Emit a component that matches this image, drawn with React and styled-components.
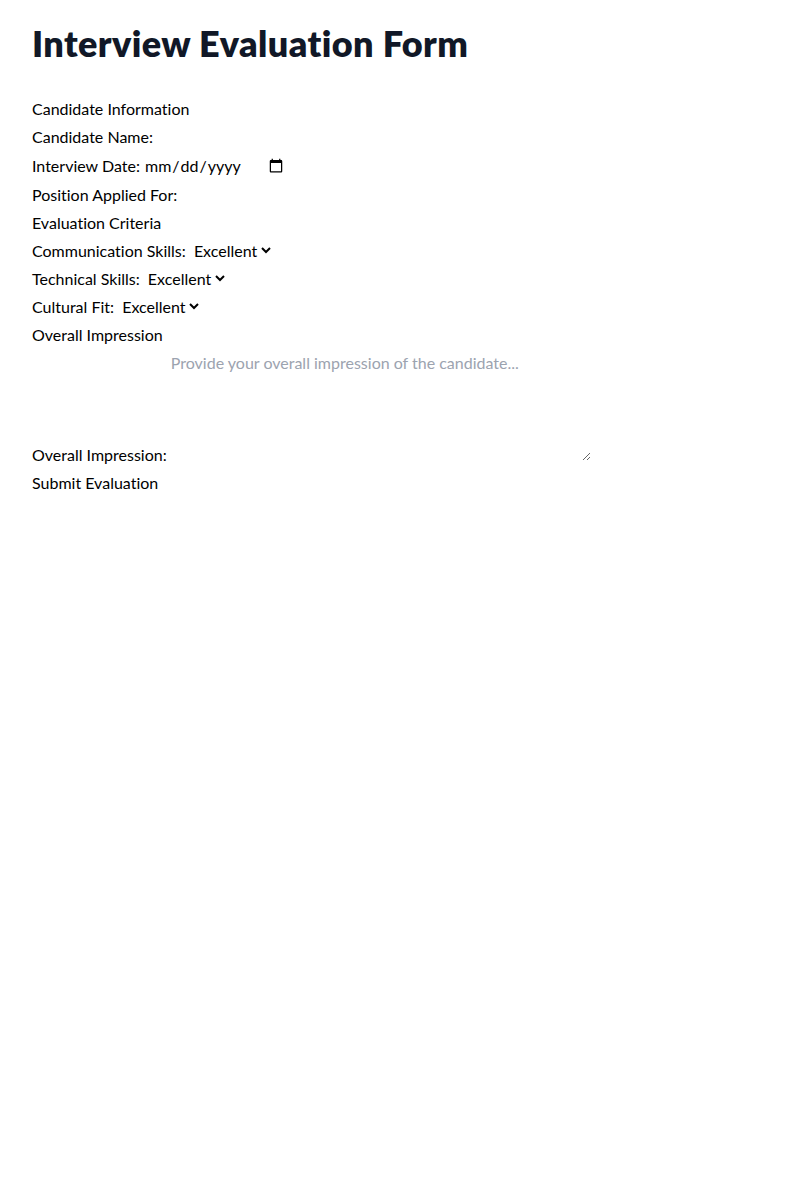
import styled, { createGlobalStyle } from "styled-components";

const GlobalStyle = createGlobalStyle`
  *, *::before, *::after {
    box-sizing: border-box;
    border-width: 0;
    border-style: solid;
  }
  html {
    line-height: 1.5;
  }
  body {
    margin: 0;
    font-family: Lato, "Noto Sans", sans-serif;
    font-variant-ligatures: none;
    background: #ffffff;
  }
  input, select, textarea, button {
    font-family: inherit;
    font-size: 100%;
    font-variant-ligatures: none;
    line-height: inherit;
    color: inherit;
    margin: 0;
    padding: 0;
    background-color: transparent;
  }
`;

const Page = styled.div`
  padding: 23px 32px;
`;

const Title = styled.h1`
  margin: 0 0 34px;
  font-size: 36px;
  line-height: 40px;
  font-weight: 800;
  letter-spacing: 0.4px;
  color: #111827;
`;

const Form = styled.form`
  display: flex;
  flex-direction: column;
  align-items: flex-start;
  gap: 4px;
  font-size: 16px;
`;

const Heading = styled.h2`
  margin: 0;
  font-size: 16px;
  font-weight: 400;
`;

const Field = styled.label`
  display: block;
`;

const TextInput = styled.input`
  &::placeholder {
    color: #9ca3af;
  }
`;

const Select = styled.select``;

const TextArea = styled.textarea`
  width: 420px;
  height: 110px;
  vertical-align: baseline;
  &::placeholder {
    color: #9ca3af;
  }
`;

const SubmitButton = styled.button`
  cursor: pointer;
`;

const criteria = ["Communication Skills", "Technical Skills", "Cultural Fit"];
const ratings = ["Excellent", "Good", "Average", "Poor"];

function App() {
  return (
    <Page>
      <GlobalStyle />
      <Title>Interview Evaluation Form</Title>
      <Form onSubmit={(e) => e.preventDefault()}>
        <Heading>Candidate Information</Heading>
        <Field>
          Candidate Name: <TextInput type="text" />
        </Field>
        <Field>
          Interview Date: <TextInput type="date" />
        </Field>
        <Field>
          Position Applied For: <TextInput type="text" />
        </Field>
        <Heading>Evaluation Criteria</Heading>
        {criteria.map((c) => (
          <Field key={c}>
            {c}:{" "}
            <Select defaultValue="Excellent">
              {ratings.map((r) => (
                <option key={r}>{r}</option>
              ))}
            </Select>
          </Field>
        ))}
        <Heading>Overall Impression</Heading>
        <Field>
          Overall Impression:{" "}
          <TextArea placeholder="Provide your overall impression of the candidate..." />
        </Field>
        <SubmitButton type="submit">Submit Evaluation</SubmitButton>
      </Form>
    </Page>
  );
}

export default App;
